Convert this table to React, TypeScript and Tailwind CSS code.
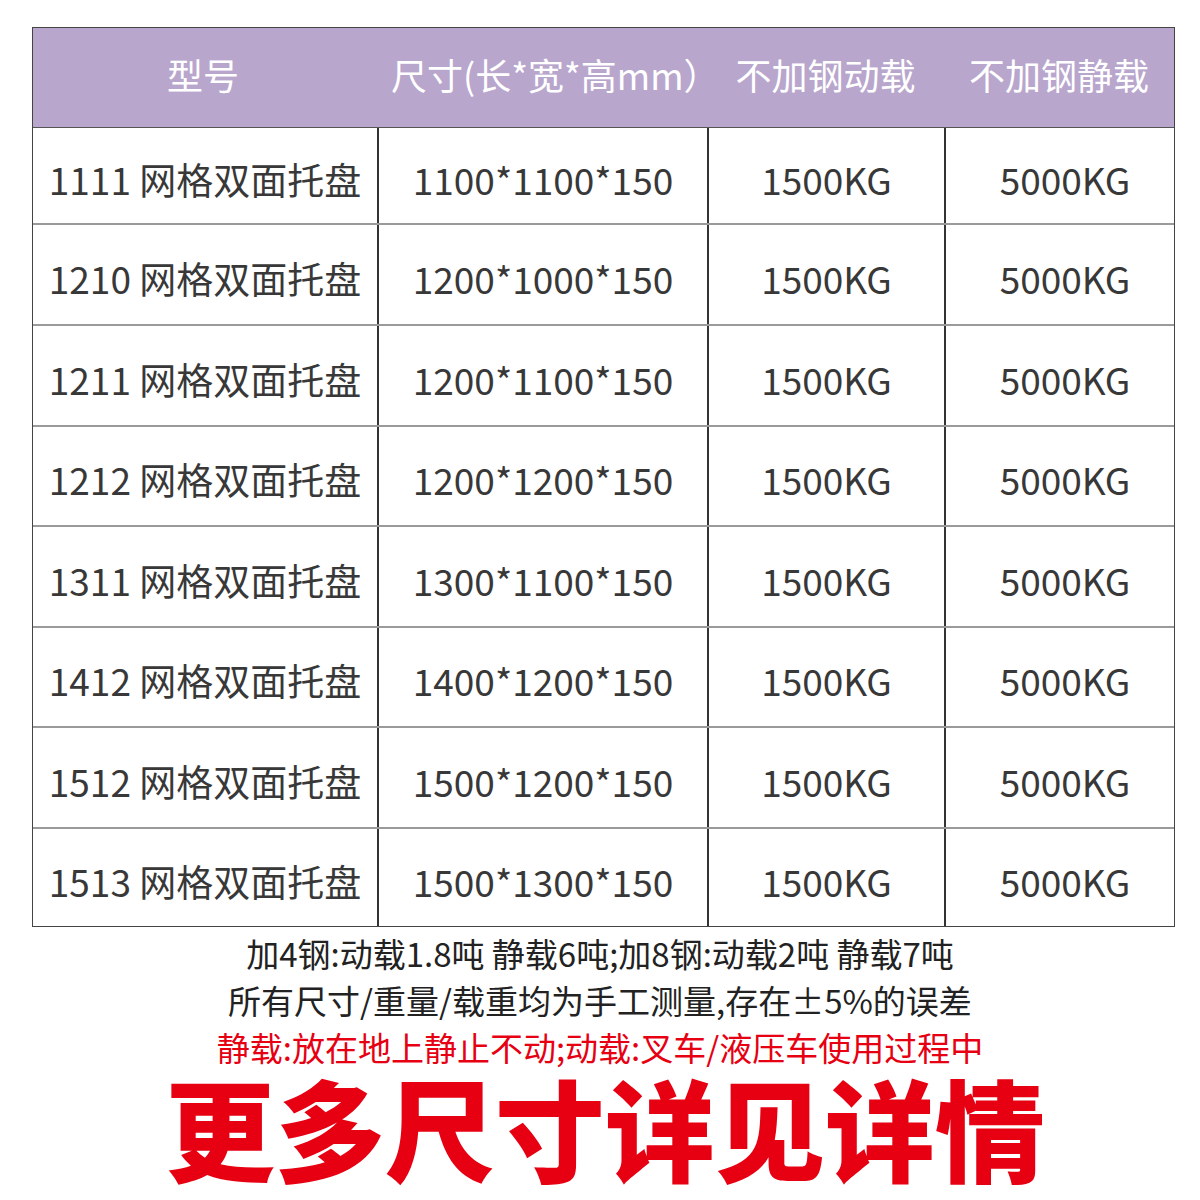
const rows = [
  ["1111", "1100*1100*150"],
  ["1210", "1200*1000*150"],
  ["1211", "1200*1100*150"],
  ["1212", "1200*1200*150"],
  ["1311", "1300*1100*150"],
  ["1412", "1400*1200*150"],
  ["1512", "1500*1200*150"],
  ["1513", "1500*1300*150"],
]

const heights = ["h-[95px]", "h-[101px]", "h-[101px]", "h-[100px]", "h-[101px]", "h-[100px]", "h-[101px]", "h-[99px]"]

export default function App() {
  return (
    <div className="w-[1200px] h-[1200px] bg-white overflow-hidden font-['Noto_Sans_CJK_SC','Noto_Sans',sans-serif]">
      <div className="pt-[27px] pl-[32px]">
        <div className="w-[1143px] border border-[#444]">
          {/* header */}
          <div className="h-[100px] pb-[8px] bg-[#b8a6cd] grid grid-cols-[344px_330px_237px_230px] text-white text-[36px] items-center border-b border-[#555]">
            <div className="text-center pr-[4px]">型号</div>
            <div className="text-center pl-[14px]">尺寸(长*宽*高mm）</div>
            <div className="text-center">不加钢动载</div>
            <div className="text-center">不加钢静载</div>
          </div>
          {rows.map(([code, size], i) => (
            <div
              key={code}
              className={`${heights[i]} grid grid-cols-[344px_330px_237px_230px] text-[#383838] text-[37px] ${i > 0 ? "border-t-2 border-[#9a9a9a]" : ""}`}
            >
              <div className="flex items-center justify-center pt-[8px]">{code} 网格双面托盘</div>
              <div className="flex items-center justify-center pt-[8px] border-l-2 border-[#333]">{size}</div>
              <div className="flex items-center justify-center pt-[8px] border-l-2 border-[#333]">1500KG</div>
              <div className="flex items-center justify-center pt-[8px] pl-[10px] border-l-2 border-[#333]">5000KG</div>
            </div>
          ))}
        </div>
      </div>

      <div className="mt-[3px] flex flex-col items-center text-[33px] leading-[47px] text-[#222]">
        <div>加4钢:动载1.8吨 静载6吨;加8钢:动载2吨 静载7吨</div>
        <div>所有尺寸/重量/载重均为手工测量,存在±5%的误差</div>
        <div className="text-[#e60012]">静载:放在地上静止不动;动载:叉车/液压车使用过程中</div>
      </div>

      <div className="flex justify-center pl-[10px] text-[110px] leading-[110px] font-black text-[#e60012]">
        更多尺寸详见详情
      </div>
    </div>
  )
}
